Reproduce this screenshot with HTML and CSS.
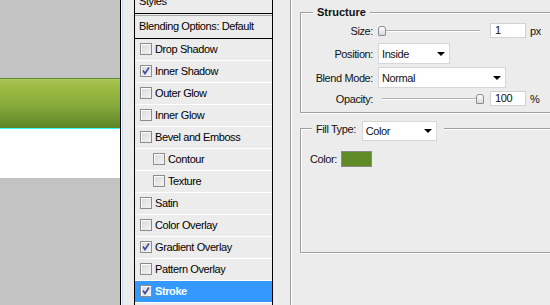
FILE: index.html
```html
<!DOCTYPE html>
<html>
<head>
  <title>Layer Style - Stroke</title>
  <link rel="stylesheet" href="styles.css">
</head>
<body>
  <div class="window">
    <!-- document canvas peeking in on the left -->
    <div class="canvas">
      <div class="canvas-top"></div>
      <div class="green-bar"></div>
      <div class="white-band"></div>
    </div>
    <div class="strip"></div>

    <!-- layer style list -->
    <div class="styles-list">
      <div class="list-header"><span>Styles</span></div>
      <div class="list-blend">Blending Options: Default</div>
      <div class="list-item"><span class="check"></span>Drop Shadow</div>
      <div class="list-item"><span class="check checked"><svg viewBox="0 0 10 10"><path d="M2 4.5 L4 7.5 L8 1.5" /></svg></span>Inner Shadow</div>
      <div class="list-item"><span class="check"></span>Outer Glow</div>
      <div class="list-item"><span class="check"></span>Inner Glow</div>
      <div class="list-item"><span class="check"></span>Bevel and Emboss</div>
      <div class="list-item sub"><span class="check"></span>Contour</div>
      <div class="list-item sub"><span class="check"></span>Texture</div>
      <div class="list-item"><span class="check"></span>Satin</div>
      <div class="list-item"><span class="check"></span>Color Overlay</div>
      <div class="list-item"><span class="check checked"><svg viewBox="0 0 10 10"><path d="M2 4.5 L4 7.5 L8 1.5" /></svg></span>Gradient Overlay</div>
      <div class="list-item"><span class="check"></span>Pattern Overlay</div>
      <div class="list-item selected"><span class="check checked"><svg viewBox="0 0 10 10"><path d="M2 4.5 L4 7.5 L8 1.5" /></svg></span>Stroke</div>
    </div>
    <div class="gap"></div>

    <!-- stroke options -->
    <div class="options">
      <div class="group structure">
        <div class="legend bold">Structure</div>
        <div class="row row-size">
          <div class="label">Size:</div>
          <div class="control">
            <div class="slider"><div class="track"></div><div class="thumb thumb-min"></div></div>
            <div class="num">1</div>
            <span class="unit">px</span>
          </div>
        </div>
        <div class="row row-position">
          <div class="label">Position:</div>
          <div class="control">
            <div class="select select-position"><span>Inside</span><span class="arrow"></span></div>
          </div>
        </div>
        <div class="row row-blend">
          <div class="label">Blend Mode:</div>
          <div class="control">
            <div class="select select-blend"><span>Normal</span><span class="arrow"></span></div>
          </div>
        </div>
        <div class="row row-opacity">
          <div class="label">Opacity:</div>
          <div class="control">
            <div class="slider"><div class="track"></div><div class="thumb thumb-max"></div></div>
            <div class="num">100</div>
            <span class="unit">%</span>
          </div>
        </div>
      </div>

      <div class="group fill">
        <div class="legend fill-legend">
          <span>Fill Type:</span>
          <div class="select select-fill"><span>Color</span><span class="arrow"></span></div>
        </div>
        <div class="color-row">
          <span>Color:</span>
          <div class="swatch"></div>
        </div>
      </div>
    </div>
  </div>
</body>
</html>
```

FILE: styles.css
```css
/* page and window */
body {
  margin: 0;
  font-family: "Liberation Sans", Arial, sans-serif;
  font-size: 11px;
  letter-spacing: -0.4px;
  color: #000;
  background: #ececec;
  overflow: hidden;
}

.window {
  display: flex;
  width: 550px;
  height: 305px;
  overflow: hidden;
}

/* Style for the canvas on the left */
.canvas {
  width: 120px;
  flex-shrink: 0;
  background: #c3c3c3;
  border-right: 1px solid #000;
}

.canvas-top {
  height: 78px;
}

.green-bar {
  height: 50px;
  border-bottom: 1px solid #33ffff;
  background: linear-gradient(#5f8a2b 0, #5f8a2b 1px, #b5cf6b 1px, #a6c351 3px, #9aba42 10px, #86a93a 28px, #5c8527 50px);
}

.white-band {
  height: 49px;
  background: #fff;
}

.strip {
  width: 12px;
  flex-shrink: 0;
  border-left: 1px solid #fff;
  box-shadow: inset 1px 0 #c9dcef;
}

.gap {
  width: 17px;
  flex-shrink: 0;
}

/* Style for the styles list */
.styles-list {
  width: 137px;
  flex-shrink: 0;
  border-left: 1px solid #000;
  border-right: 1px solid #000;
}

.list-header {
  height: 13px;
  overflow: hidden;
  border-bottom: 1px solid #000;
  padding-left: 4px;
}

.list-header span {
  display: block;
  line-height: 13px;
  margin-top: -5px;
}

.list-blend {
  margin-top: 1px;
  border-top: 1px solid #a8a8a8;
  border-bottom: 1px solid #000;
  height: 22px;
  line-height: 20px;
  padding-left: 4px;
}

.list-item {
  display: flex;
  align-items: center;
  gap: 3px;
  height: 21px;
  box-sizing: border-box;
  padding-bottom: 1px;
  border-bottom: 1px solid #fff;
  padding-left: 5px;
}

.list-item {
  height: 22px;
}

.list-item.sub {
  padding-left: 18px;
}

.list-item.selected {
  background: #3399ff;
  color: #fff;
  font-weight: bold;
}

.check {
  width: 12px;
  height: 12px;
  box-sizing: border-box;
  border: 1px solid #8c8c8c;
  background: linear-gradient(135deg, #d8d8d8, #f4f4f4);
  box-shadow: inset 1px 1px 0 #fff;
  display: flex;
  align-items: center;
  justify-content: center;
}

.check svg {
  width: 10px;
  height: 10px;
  fill: none;
  stroke: #3b4b9c;
  stroke-width: 1.6;
}

/* Style for the options panel */
.options {
  flex: 1;
  border-left: 1px solid #a0a0a0;
  box-shadow: inset 1px 0 #fff;
  padding-left: 9px;
  padding-top: 12px;
}

.group {
  position: relative;
  width: 300px;
  border: 1px solid #a0a0a0;
  box-shadow: inset 1px 1px 0 #fff, 1px 1px 0 #fff;
}

.legend {
  position: absolute;
  background: #ececec;
  color: #111;
}

.bold {
  font-weight: bold;
  letter-spacing: 0;
  top: -7px;
  left: 12px;
  padding: 0 4px;
  line-height: 13px;
}

.structure {
  height: 101px;
  box-sizing: border-box;
  padding-top: 10px;
}

.row {
  display: grid;
  grid-template-columns: 72px auto;
  column-gap: 5px;
  align-items: center;
  color: #111;
}

.label {
  text-align: right;
}

.control {
  display: flex;
  align-items: center;
}

.row-size,
.row-opacity {
  height: 15px;
}

.row-position,
.row-blend {
  height: 21px;
}

.row-position {
  margin-top: 5px;
}

.row-blend,
.row-opacity {
  margin-top: 3px;
}

.slider {
  position: relative;
  width: 106px;
  height: 15px;
  margin-right: 6px;
}

.track {
  position: absolute;
  left: 4px;
  right: 4px;
  top: 7px;
  height: 1px;
  background: #b0b0b0;
  border-bottom: 1px solid #fff;
}

.thumb {
  position: absolute;
  top: 3px;
  width: 8px;
  height: 10px;
  box-sizing: border-box;
  border: 1px solid #8a8a8a;
  border-radius: 3px 3px 1px 1px;
  background: linear-gradient(#fefefe, #d9d9d9);
}

.thumb-min {
  left: 0;
}

.thumb-max {
  left: 98px;
}

.num {
  width: 36px;
  height: 15px;
  box-sizing: border-box;
  background: #fff;
  border: 1px solid #d2d2d2;
  padding-left: 4px;
  line-height: 13px;
}

.unit {
  margin-left: 4px;
}

.select {
  display: flex;
  align-items: center;
  justify-content: space-between;
  box-sizing: border-box;
  height: 21px;
  background: #fff;
  border: 1px solid #d6d6d6;
  padding: 0 4px 0 3px;
}

.select-position {
  width: 72px;
}

.select-blend {
  width: 128px;
}

.arrow {
  width: 0;
  height: 0;
  border-left: 4px solid transparent;
  border-right: 4px solid transparent;
  border-top: 4px solid #000;
}

/* fill type group */
.fill {
  margin-top: 15px;
  height: 125px;
  box-sizing: border-box;
  padding: 22px 0 0 9px;
}

.fill-legend {
  top: -8px;
  left: 11px;
  display: flex;
  align-items: center;
  gap: 6px;
  padding: 0 7px 0 4px;
}

.fill-legend > span {
  margin-top: -4px;
}

.select-fill {
  width: 75px;
  height: 20px;
}

.color-row {
  display: flex;
  align-items: center;
  gap: 4px;
  color: #111;
}

.swatch {
  width: 31px;
  height: 16px;
  box-sizing: border-box;
  border: 1px solid #8a8a8a;
  background: #5f8a25;
}
```
